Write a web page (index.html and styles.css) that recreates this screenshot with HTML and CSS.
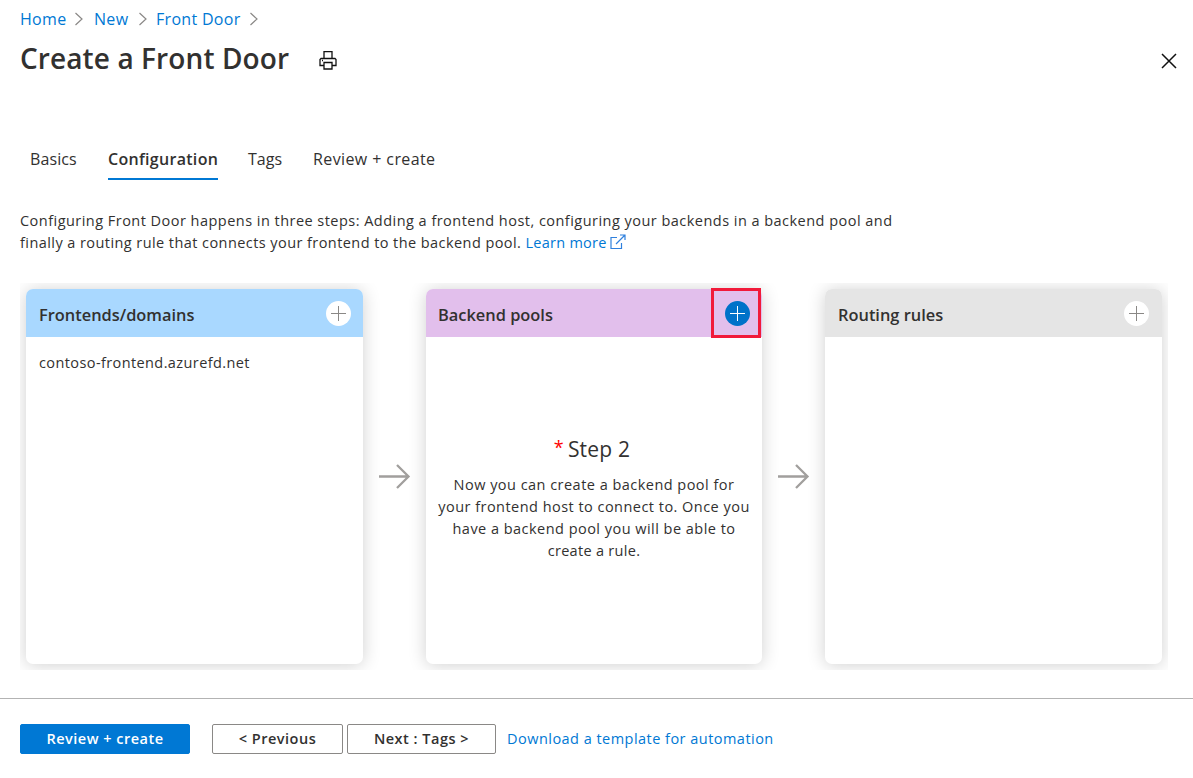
FILE: index.html
```html
<!DOCTYPE html>
<html lang="en">
<head>
<meta charset="utf-8">
<title>Create a Front Door</title>
<link rel="stylesheet" href="styles.css">
</head>
<body>
<div class="page">
  <nav class="breadcrumb">
    <a class="crumb crumb-home">Home</a>
    <svg class="chevron" viewBox="0 0 10 14"><path d="M1.5 1l6.500 6-6.500 6"/></svg>
    <a class="crumb crumb-new">New</a>
    <svg class="chevron" viewBox="0 0 10 14"><path d="M1.5 1l6.500 6-6.500 6"/></svg>
    <a class="crumb crumb-door">Front Door</a>
    <svg class="chevron" viewBox="0 0 10 14"><path d="M1.5 1l6.500 6-6.500 6"/></svg>
  </nav>
  <header class="title-row">
    <h1 class="title">Create a Front Door</h1>
    <svg class="print" viewBox="0 0 18 19"><path d="M5 7.500v-7h8v7M5 14.500H1v-6l1-1h14l1 1v6h-4M5 11.500h8v6.500H5z"/><path d="M3 9.500h1"/></svg>
    <svg class="close" viewBox="0 0 16 16"><path d="M1 1l14 14M15 1L1 15"/></svg>
  </header>
  <nav class="tabs">
    <a class="tab tab-basics">Basics</a>
    <a class="tab tab-active">Configuration</a>
    <a class="tab tab-tags">Tags</a>
    <a class="tab tab-review">Review + create</a>
  </nav>
  <div class="intro">
    <div class="intro-line intro-first">Configuring Front Door happens in three steps: Adding a frontend host, configuring your backends in a backend pool and</div>
    <div class="intro-line intro-second"><span>finally a routing rule that connects your frontend to the backend pool. <a class="link learn">Learn more</a></span><svg class="external" viewBox="0 0 16 16"><path d="M7 3.500H1v11h10.500V9M10 1h5v5M15 1L6 10"/></svg></div>
  </div>
  <main class="board">
    <section class="card">
      <div class="card-head head-blue"><h2 class="card-title">Frontends/domains</h2><span class="add"><svg viewBox="0 0 25 25"><path d="M12.500 5v15M5 12.500h15"/></svg></span></div>
      <div class="card-list"><span class="host">contoso-frontend.azurefd.net</span></div>
    </section>
    <svg class="arrow" viewBox="0 0 32 26"><path d="M0 12.500h29.500M18 1l11.500 11.500L18 24"/></svg>
    <section class="card card-mid">
      <div class="card-head head-purple"><h2 class="card-title">Backend pools</h2><span class="add add-active"><svg viewBox="0 0 25 25"><path d="M12.500 5v15M5 12.500h15"/></svg></span><span class="highlight"></span></div>
      <div class="step">
        <h3 class="step-title"><span class="star">*</span><span class="step-name">Step 2</span></h3>
        <div class="step-text"><span>Now you can create a backend pool for</span><span>your frontend host to connect to. Once you</span><span>have a backend pool you will be able to</span><span class="step-last">create a rule.</span></div>
      </div>
    </section>
    <svg class="arrow" viewBox="0 0 32 26"><path d="M0 12.500h29.500M18 1l11.500 11.500L18 24"/></svg>
    <section class="card">
      <div class="card-head head-grey"><h2 class="card-title">Routing rules</h2><span class="add"><svg viewBox="0 0 25 25"><path d="M12.500 5v15M5 12.500h15"/></svg></span></div>
    </section>
  </main>
  <footer class="footer">
    <button class="btn btn-primary">Review + create</button>
    <button class="btn btn-prev">&lt; Previous</button>
    <button class="btn btn-next">Next : Tags &gt;</button>
    <a class="link download">Download a template for automation</a>
  </footer>
</div>
</body>
</html>
```
FILE: styles.css
```css
* { box-sizing: border-box; }
body { margin: 0; background: #fff; color: #323130; font: 14.5px/22px "Segoe UI", "Open Sans", sans-serif; letter-spacing: .47px; }
svg { fill: none; display: block; flex: none; }
h1, h2, h3 { margin: 0; }
.page { width: 1193px; height: 778px; display: flex; flex-direction: column; overflow: hidden; white-space: nowrap; }
.breadcrumb { height: 38px; padding-left: 20px; display: flex; align-items: center; font-size: 16px; letter-spacing: .3px; color: #0078d4; flex: none; }
.crumb-home { width: 54px; }
.crumb-new { width: 44px; margin-left: 10px; }
.crumb-door { width: 93px; margin-left: 8px; }
.chevron { width: 10px; height: 14px; stroke: #8a8886; stroke-width: 1.2; }
.title-row { height: 44px; padding: 0 16px 0 20px; display: flex; align-items: center; flex: none; }
.title { font-size: 28px; line-height: 40px; font-weight: 600; width: 299px; letter-spacing: .1px; margin-top: -4px; }
.print { width: 18px; height: 19px; stroke: #111; stroke-width: 1.3; }
.close { width: 16px; height: 16px; margin-top: 1px; stroke: #111; stroke-width: 1.5; margin-left: auto; }
.tabs { height: 40px; margin: 58px 0 0 30px; display: flex; font-size: 16px; line-height: 38px; letter-spacing: .1px; flex: none; }
.tab-basics { width: 78px; }
.tab-active { width: 110px; font-weight: 600; letter-spacing: .3px; border-bottom: 2px solid #0078d4; margin-right: 30px; }
.tab-tags { width: 65px; letter-spacing: 0; }
.tab-review { letter-spacing: .4px; }
.intro { height: 44px; margin: 30px 0 0 20px; flex: none; }
.intro-line { height: 22px; display: flex; align-items: center; }
.intro-second { letter-spacing: .43px; }
.link { color: #0078d4; }
.learn { letter-spacing: .25px; }
.external { width: 16px; height: 16px; margin: -3px 0 0 3px; stroke: #2f80dd; stroke-width: 1.2; }
.board { height: 387px; margin: 29px 25px 0 20px; padding: 6px; display: flex; align-items: flex-start; overflow: hidden; flex: none; }
.card { width: 337px; height: 375px; border-radius: 7px; background: #fff; box-shadow: 0 1px 18px rgba(0,0,0,.19); flex: none; }
.card-mid { width: 336px; }
.card-head { position: relative; height: 48px; display: flex; align-items: center; justify-content: space-between; padding: 3px 12px 0 13px; border-radius: 7px 7px 0 0; }
.card-mid .card-head { padding-left: 12px; }
.head-blue { background: #a9d8ff; }
.head-purple { background: #e2bfec; }
.head-grey { background: #e5e5e5; padding-right: 13px; }
.card-title { font-size: 16.4px; font-weight: 600; line-height: 24px; letter-spacing: 0; }
.add { width: 25px; height: 25px; margin-top: -2px; border-radius: 50%; background: #fff; stroke: #8a8886; }
.add-active { background: #0072c9; stroke: #fff; }
.highlight { position: absolute; left: 285px; top: -1px; width: 50px; height: 50px; border: 3px solid #f11a3a; }
.card-list { padding: 15px 13px; letter-spacing: .4px; }
.arrow { width: 32px; height: 26px; margin: 175px 15px 0 16px; stroke: #a19f9d; stroke-width: 2.3; }
.step { padding-top: 96px; display: flex; flex-direction: column; align-items: center; }
.step-title { height: 30px; margin-right: 4px; display: flex; font-size: 21px; line-height: 32px; font-weight: 400; letter-spacing: .2px; }
.star { color: #f00; font-size: 18px; line-height: 29px; margin-right: 4px; }
.step-text { margin-top: 11px; display: flex; flex-direction: column; align-items: center; }
.step-last { letter-spacing: .3px; }
.footer { margin-top: 28px; height: 80px; padding: 25px 20px; border-top: 1px solid #b3b3b3; display: flex; align-items: flex-start; flex: none; }
.btn { height: 30px; padding: 0; border: 1px solid #8a8886; border-radius: 2px; background: #fff; color: #323130; font: 600 14.5px/20px "Segoe UI", "Open Sans", sans-serif; letter-spacing: .5px; }
.btn-primary { width: 170px; margin-right: 22px; background: #0078d4; border-color: #0078d4; color: #fff; }
.btn-prev { width: 131px; margin-right: 4px; }
.btn-next { width: 149px; margin-right: 11px; }
.download { line-height: 29px; }
```
